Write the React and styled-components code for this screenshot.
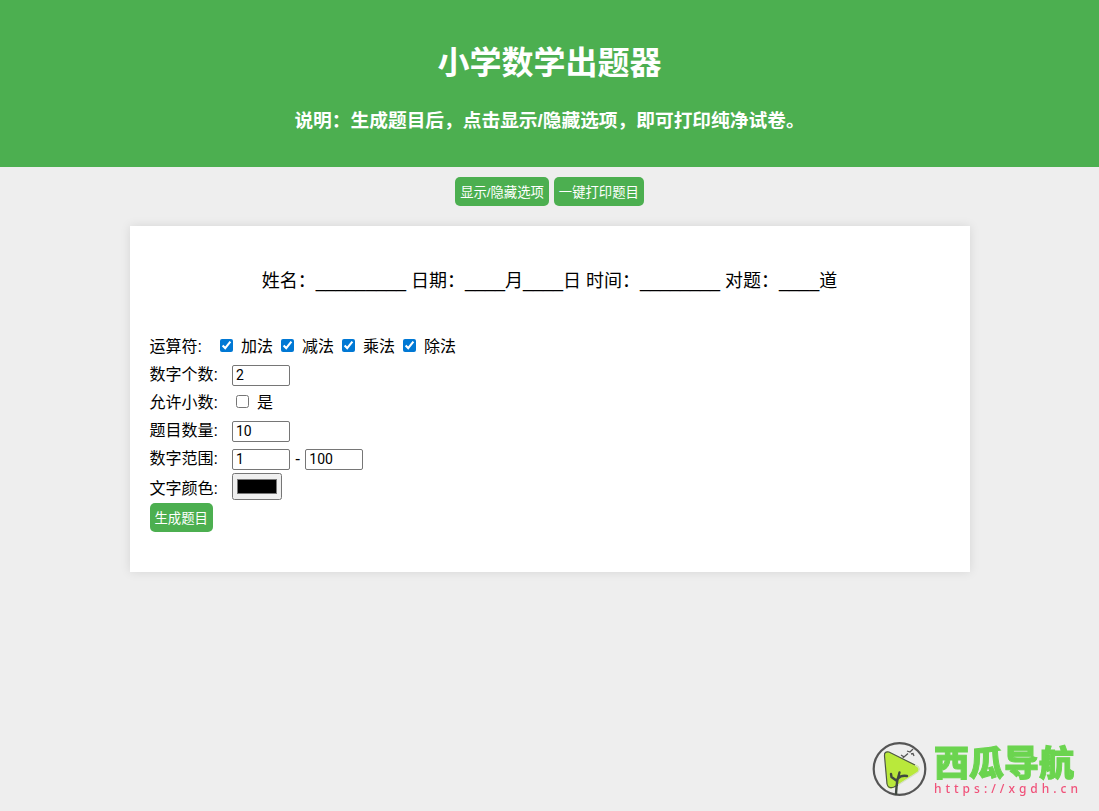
import React, { useState } from "react";
import styled, { createGlobalStyle } from "styled-components";

const GlobalStyle = createGlobalStyle`
  body {
    margin: 0;
    background: #eeeeee;
    color: #000;
    font-family: "Liberation Sans", "Noto Sans CJK SC", sans-serif;
    font-size: 16px;
  }
`;

const Header = styled.header`
  padding: 20px;
  background: #4caf50;
  color: #fff;
  text-align: center;
`;

const Title = styled.h1`
  margin: 20px 0;
  font-size: 32px;
  line-height: 46px;
`;

const Hint = styled.h3`
  margin: 20px 0 12px;
  line-height: 29px;
`;

const Toolbar = styled.div`
  display: flex;
  justify-content: center;
  gap: 5px;
  margin: 10px 0 20px;
`;

const Button = styled.button`
  padding: 6px 5px 4px;
  border: none;
  border-radius: 5px;
  background: #4caf50;
  color: #fff;
  font-family: inherit;
  line-height: 19px;
  cursor: pointer;
`;

const Sheet = styled.main`
  box-sizing: border-box;
  max-width: 840px;
  margin: 0 auto 20px;
  padding: 40px 20px;
  background: #fff;
  box-shadow: 0 0 10px rgba(0, 0, 0, 0.1);
`;

const StudentLine = styled.p`
  margin: 0 0 35px;
  font-size: 18px;
  line-height: 30px;
  text-align: center;
`;

const Row = styled.div`
  display: flex;
  align-items: center;
  height: ${(p) => (p.$tall ? "31px" : "28px")};
  padding-bottom: ${(p) => (p.$tall ? "1px" : "0")};
`;

const RowLabel = styled.label`
  margin-right: 14px;
`;

const Option = styled.label`
  display: flex;
  align-items: center;
  margin-right: 4px;
`;

const Tick = styled.input`
  width: 13px;
  height: 13px;
  margin: 0 8px 0 4px;
  accent-color: #0078d4;
`;

const NumberField = styled.input`
  box-sizing: border-box;
  width: 58px;
  height: 21px;
  margin: 4px 0 0;
  padding: 1px 3px;
  border: 1px solid #767676;
  border-radius: 2px;
  font-family: Roboto, sans-serif;
  font-size: 14px;
`;

const Dash = styled.span`
  margin: 4px 5px 0;
`;

const ColorField = styled.input`
  width: 50px;
  height: 27px;
  margin: 0;
`;

const Brand = styled.a`
  position: fixed;
  right: 17px;
  bottom: 14px;
  display: flex;
  align-items: center;
  gap: 7px;
  text-decoration: none;
`;

const BrandText = styled.span`
  display: flex;
  flex-direction: column;
`;

const BrandName = styled.span`
  color: #6bd44f;
  font-family: "Noto Sans CJK SC", sans-serif;
  font-size: 35px;
  font-weight: 900;
  line-height: 40px;
  -webkit-text-stroke: 1px #6bd44f;
`;

const BrandUrl = styled.span`
  color: #f0527a;
  font-family: "Noto Sans", sans-serif;
  font-size: 12px;
  font-weight: 500;
  letter-spacing: 4px;
  line-height: 16px;
`;

const OPERATORS = ["加法", "减法", "乘法", "除法"];

function BrandMark() {
  return (
    <svg width="55" height="56" viewBox="0 0 55 56" fill="none" aria-hidden="true">
      <circle cx="27.5" cy="28" r="25.8" stroke="#555" strokeWidth="2.2" />
      <path
        d="M16 10.5 L46 25 Q49 28 46 31 L21 47 Q16 49 15 44 L12.5 14 Q12.5 10 16 10.5Z"
        fill="#b9e93b"
      />
      <path
        d="M26 44 L22 46 Q16 48 15 43 L12.5 15 Q12 10 17 11 L43 24"
        stroke="#4d5548"
        strokeWidth="1.2"
      />
      <path d="M43 24 L46 26 Q48 28 46 31 L26 44" stroke="#d5dfc7" strokeWidth="1.2" />
      <path
        d="M24 53 Q24.500 44 25.500 38 M25 40 L19.500 36 L19 33 M25.500 39 L27.500 31.500 M26 37.500 Q29 34 35 35"
        stroke="#404941"
        strokeWidth="2.4"
        strokeLinecap="round"
        strokeLinejoin="round"
      />
      <path
        d="M29 14 L32 16 L36 12.500 M35 10 L38 11 L41 8 M39 13 L41 12.500 L42 15 M32 15 L31 17"
        stroke="#555"
        strokeWidth="1.3"
      />
    </svg>
  );
}

export default function App() {
  const [open, setOpen] = useState(true);

  return (
    <>
      <GlobalStyle />
      <Header>
        <Title>小学数学出题器</Title>
        <Hint>说明：生成题目后，点击显示/隐藏选项，即可打印纯净试卷。</Hint>
      </Header>
      <Toolbar>
        <Button type="button" onClick={() => setOpen(!open)}>显示/隐藏选项</Button>
        <Button type="button" onClick={() => window.print()}>一键打印题目</Button>
      </Toolbar>
      <Sheet>
        <StudentLine>
          姓名：_________ 日期：____月____日 时间：________ 对题：____道
        </StudentLine>
        {open && (
          <form onSubmit={(e) => e.preventDefault()}>
            <Row role="group" aria-labelledby="operators">
              <RowLabel as="span" id="operators">运算符:</RowLabel>
              {OPERATORS.map((name) => (
                <Option key={name}>
                  <Tick type="checkbox" defaultChecked />
                  {name}
                </Option>
              ))}
            </Row>
            <Row>
              <RowLabel htmlFor="operands">数字个数:</RowLabel>
              <NumberField id="operands" type="number" defaultValue="2" />
            </Row>
            <Row role="group" aria-labelledby="decimals">
              <RowLabel as="span" id="decimals">允许小数:</RowLabel>
              <Option>
                <Tick type="checkbox" />是
              </Option>
            </Row>
            <Row>
              <RowLabel htmlFor="count">题目数量:</RowLabel>
              <NumberField id="count" type="number" defaultValue="10" />
            </Row>
            <Row>
              <RowLabel htmlFor="min">数字范围:</RowLabel>
              <NumberField id="min" type="number" defaultValue="1" />
              <Dash>-</Dash>
              <NumberField type="number" defaultValue="100" aria-label="数字范围最大值" />
            </Row>
            <Row $tall>
              <RowLabel htmlFor="color">文字颜色:</RowLabel>
              <ColorField id="color" type="color" defaultValue="#000000" />
            </Row>
            <Button type="submit">生成题目</Button>
          </form>
        )}
      </Sheet>
      <Brand href="https://xgdh.cn">
        <BrandMark />
        <BrandText>
          <BrandName>西瓜导航</BrandName>
          <BrandUrl>https://xgdh.cn</BrandUrl>
        </BrandText>
      </Brand>
    </>
  );
}
